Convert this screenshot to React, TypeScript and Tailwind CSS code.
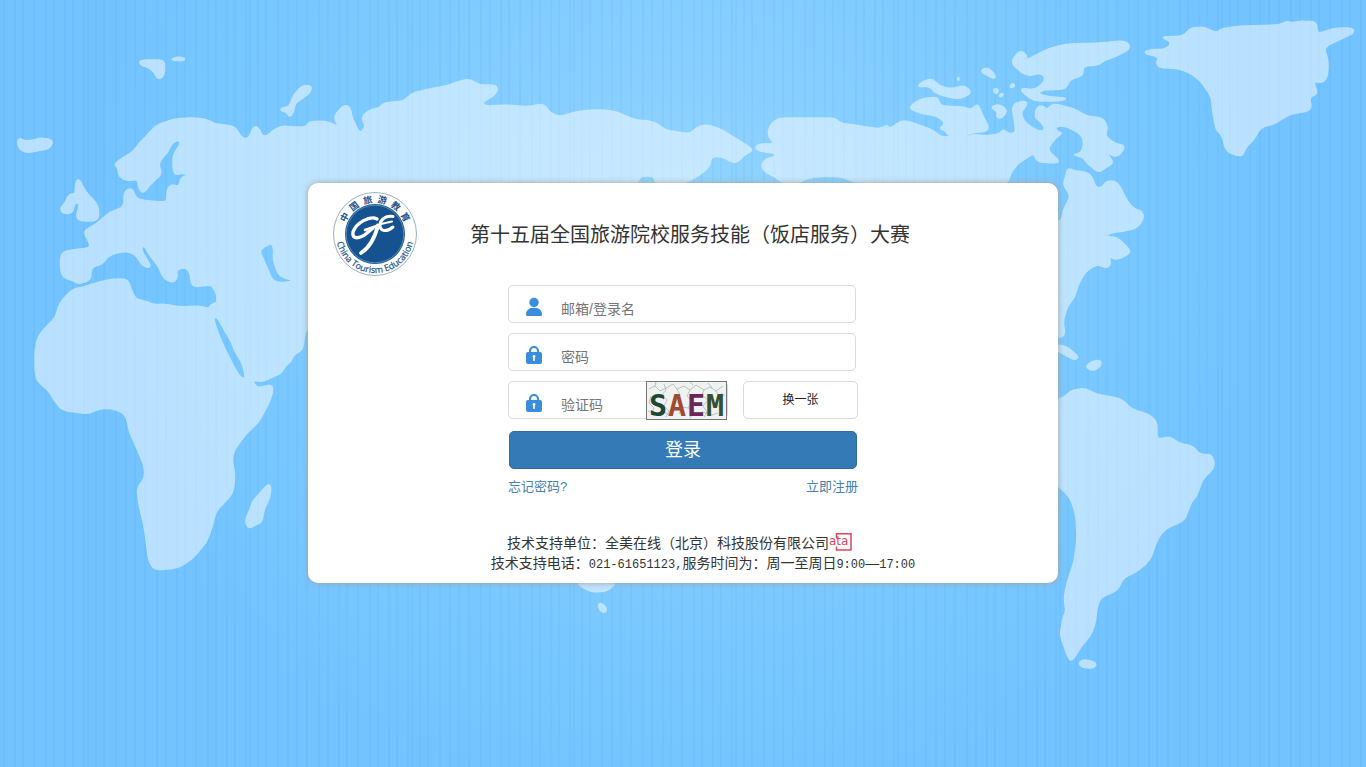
import React, { useState } from 'react';

const land = [
  // Europe, Asia and Africa, with the Caspian and the Red Sea cut out
  'M62 252L72 250L89 248L90 244L83 231L95 225L110 212L124 207L124 193L129 188L134 191L136 199L150 201L164 202L167 200L167 189L172 184L179 187L181 177L190 175L181 173L176 175L173 170L173 155L181 143L178 140L172 143L167 154L158 162L162 174L155 180L149 186L143 194L138 187L138 179L128 181L119 177L118 168L114 164L124 157L133 152L140 142L147 136L155 126L165 122L175 119L185 118L200 118L210 121L215 124L234 126L238 132L243 139L249 138L252 129L256 126L260 130L262 136L267 136L275 129L283 126L293 127L307 127L308 122L320 121L330 122L340 128L334 119L337 112L344 105L350 107L352 118L360 134L366 126L362 120L364 114L372 109L380 108L383 103L404 101L412 93L430 89L450 85L460 81L470 79L479 85L495 85L498 89L494 96L482 102L485 106L510 105L528 107L540 104L546 106L549 112L559 117L575 112L590 110L605 110L617 112L635 120L650 121L658 124L665 130L690 134L697 127L705 125L712 126L722 130L735 138L754 150L745 154L736 164L720 156L711 157L710 166L700 175L685 183L655 183L654 176L640 176L638 183L560 240L400 340L308 330L305 331L303 347L301 351L293 355L291 362L284 367L282 373L270 378L262 382L252 380L257 388L265 386L272 385L273 392L268 405L258 423L248 432L243 438L234 450L232 460L235 475L233 493L225 502L216 511L212 527L206 543L192 559L178 568L155 570L149 562L144 525L139 505L137 488L145 478L144 465L134 442L129 431L127 418L122 412L110 408L98 409L88 414L62 410L53 399L50 392L37 381L35 370L35 350L38 336L46 327L56 317L58 307L62 300L73 289L83 287L95 283L113 279L128 279L131 290L136 299L145 301L155 305L163 304L180 307L200 306L209 309L211 304L217 303L217 295L213 287L210 285L192 287L190 272L184 267L176 270L178 277L173 283L163 278L159 267L148 253L144 245L141 249L146 258L151 266L147 268L141 264L138 258L130 251L115 253L107 257L103 264L91 267L91 280L78 284L74 281L62 277L60 262ZM259 250L271 243L274 248L273 260L279 276L294 281L280 283L272 280L266 265ZM213 317L218 318L223 328L231 341L236 354L242 362L246 379L240 377L233 365L225 349L219 336Z',
  // North America
  'M755 149L758 144L775 144L768 136L769 127L775 120L782 118L835 118L840 123L860 126L880 129L887 125L890 129L902 120L913 123L925 127L934 131L943 138L953 135L963 139L973 134L985 136L1000 134L1003 129L1009 134L1016 133L1014 118L1012 106L1018 102L1027 101L1026 107L1021 112L1023 120L1032 128L1042 132L1045 128L1041 122L1035 118L1036 108L1042 105L1047 110L1051 105L1057 104L1066 107L1075 109L1086 116L1103 118L1108 127L1105 136L1114 143L1126 146L1117 158L1106 152L1114 163L1106 167L1099 173L1086 162L1083 157L1072 155L1082 153L1084 139L1078 132L1065 126L1056 126L1056 131L1063 133L1055 138L1047 150L1059 160L1057 163L1037 162L1034 153L1027 158L1018 163L1010 174L1008 183L857 183L842 177L825 176L808 178L798 183L782 183L776 177L766 173L761 166L765 159L775 157L775 153L764 152Z',
  'M1068 168L1074 171L1087 172L1093 178L1095 187L1102 188L1106 181L1115 181L1120 186L1127 201L1134 209L1142 211L1144 218L1138 227L1130 230L1110 233L1105 236L1118 238L1124 244L1131 251L1126 256L1115 260L1109 256L1111 265L1106 268L1097 264L1085 272L1077 287L1075 297L1068 305L1063 320L1065 336L1056 338L1056 222L1062 220L1063 210L1070 198L1068 191L1063 185L1066 175Z',
  'M1011 63L1016 54L1021 51L1027 55L1026 60L1050 48L1068 44L1102 43L1118 41L1128 42L1130 49L1115 57L1103 61L1099 65L1083 66L1083 76L1070 79L1066 89L1042 90L1038 94L1050 97L1068 98L1060 101L1035 101L1025 95L1020 88L1035 90L1046 80L1042 73L1026 76Z',
  'M908 108L920 99L938 97L940 106L965 107L971 110L978 103L982 115L988 125L988 131L970 133L960 139L948 135L945 130L939 129L946 123L935 115L922 114Z',
  'M918 87L920 83L932 78L939 86L952 89L965 85L972 93L960 99L948 97L935 93L930 86Z',
  'M980 71L987 67L994 73L996 79L988 76Z',
  'M993 90L996 88L999 91L996 94ZM999 95L1003 93L1003 96L1000 97ZM1010 86L1013 83L1015 86L1011 88ZM957 79L959 77L959 81Z',
  'M990 107L1000 104L1008 111L1001 119L996 116L998 112Z',
  // Greenland
  'M1143 53L1151 49L1162 50L1170 46L1170 41L1161 37L1184 36L1190 28L1205 27L1216 33L1221 29L1240 26L1280 25L1287 21L1292 23L1300 21L1317 22L1317 34L1335 28L1353 28L1354 33L1328 45L1324 50L1328 58L1328 75L1323 83L1313 81L1318 94L1309 97L1312 108L1305 112L1293 113L1283 118L1275 124L1261 127L1253 141L1246 147L1243 155L1238 156L1226 151L1222 135L1216 130L1212 107L1212 98L1203 84L1194 75L1183 70L1175 68L1160 68L1156 63L1159 57Z',
  'M1056 345L1066 346L1079 357L1075 360L1067 356L1056 350Z',
  'M1085 367L1092 361L1101 360L1101 366L1093 371Z',
  // South America
  'M1056 400L1065 397L1070 391L1085 388L1095 394L1118 398L1125 402L1131 409L1148 414L1157 421L1157 440L1170 436L1178 443L1193 446L1200 455L1212 454L1215 467L1202 480L1197 496L1191 502L1185 520L1165 529L1158 538L1150 560L1138 571L1123 578L1118 590L1100 598L1097 608L1095 625L1089 638L1082 645L1073 660L1069 660L1060 635L1063 617L1066 612L1064 597L1068 580L1074 562L1077 540L1076 515L1070 497L1056 484Z',
  'M1078 663L1084 659L1097 663L1094 668L1083 668Z',
  // islands west and north of Europe
  'M17 142L20 138L24 141L35 140L38 138L50 139L53 142L49 149L40 150L28 153L20 150Z',
  'M76 180L80 180L85 191L98 205L99 218L94 221L80 221L76 216L79 208L79 202L74 204L73 213L63 214L60 208L66 202L67 197L72 193L75 195Z',
  'M139 62L143 60L165 60L164 77L157 79L155 73L148 67L142 66Z',
  'M170 60L177 57L185 58L184 61Z',
  'M303 85L312 86L310 93L303 98L295 103L293 114L289 117L287 112L281 111L281 108L289 107L294 94Z',
  'M268 484L271 486L270 498L264 509L262 522L257 524L248 529L245 520L250 510L252 502L260 493Z',
  // Australia and Tasmania
  'M576 583L587 590L594 592L607 591L617 583Z',
  'M598 604L602 603L607 609L605 613L600 611Z',
];

type Point = [number, number];

// point that lies on the way from a to b, at most half way
const towards = (a: Point, b: Point, reach: number) => {
  const length = Math.hypot(b[0] - a[0], b[1] - a[1]) || 1;
  const t = Math.min(0.5, reach / length);
  return `${(a[0] + (b[0] - a[0]) * t).toFixed(1)} ${(a[1] + (b[1] - a[1]) * t).toFixed(1)}`;
};

// rounds the corners of a coast line
const soften = (d: string) =>
  d
    .split('Z')
    .filter(Boolean)
    .map((ring) => {
      const points = ring.slice(1).split('L').map((p) => p.split(' ').map(Number) as Point);
      return (
        points
          .map((p, i) => {
            const prev = points[(i + points.length - 1) % points.length];
            const next = points[(i + 1) % points.length];
            return `${i ? 'L' : 'M'}${towards(p, prev, 6)}Q${p[0]} ${p[1]} ${towards(p, next, 6)}`;
          })
          .join('') + 'Z'
      );
    })
    .join('');

const coasts = land.map(soften);

const stripes = [4, 15, 23, 34, 46, 54, 65, 73, 84, 88, 96, 104, 116, 126, 135, 145, 157];

const WorldMap: React.FC = () => (
  <svg
    className="absolute inset-0 h-full w-full"
    viewBox="0 0 1366 767"
    preserveAspectRatio="xMidYMid slice"
    aria-hidden="true"
  >
    <defs>
      <radialGradient id="sky" gradientUnits="userSpaceOnUse" cx="683" cy="220" r="600">
        <stop offset="0" stopColor="#92d4ff" />
        <stop offset="0.5" stopColor="#7fcbff" />
        <stop offset="1" stopColor="#72c3ff" />
      </radialGradient>
      <pattern id="stripes" width="162" height="767" patternUnits="userSpaceOnUse">
        {stripes.map((x) => (
          <rect key={x} x={x - 1} width="2" height="767" fill="#4a9ee8" opacity="0.1" />
        ))}
      </pattern>
    </defs>
    <rect width="1366" height="767" fill="url(#sky)" />
    <rect width="1366" height="767" fill="url(#stripes)" />
    <g fill="#fff" stroke="#fff" strokeWidth="1.500" strokeLinejoin="round" fillRule="evenodd" opacity="0.5">
      {coasts.map((d) => (
        <path key={d} d={d} />
      ))}
    </g>
  </svg>
);

const Logo: React.FC = () => (
  <svg className="h-[86px] w-[86px] shrink-0" viewBox="0 0 86 86" role="img" aria-label="中国旅游教育">
    <defs>
      <path id="arc-bottom" d="M4 43A39 39 0 0 0 82 43" />
    </defs>
    <circle cx="43" cy="43" r="41.500" fill="#fff" stroke="#7f9cbd" strokeWidth="0.800" />
    <circle cx="43" cy="43" r="30" fill="#14538f" />
    <circle cx="43" cy="43" r="28.800" fill="none" stroke="#8fb0d0" strokeWidth="0.600" />
    {['中', '国', '旅', '游', '教', '育'].map((char, i) => (
      <text
        key={char}
        x="43"
        y="11.500"
        textAnchor="middle"
        transform={`rotate(${-61 + i * 24.4} 43 43)`}
        className="font-['Noto_Sans_CJK_SC',sans-serif] text-[9px] font-bold"
        fill="#1c4f88"
      >
        {char}
      </text>
    ))}
    <text className="font-['Open_Sans','Liberation_Sans',sans-serif] text-[9px]" fill="#1c4f88" stroke="#1c4f88" strokeWidth="0.200">
      <textPath href="#arc-bottom" startOffset="50%" textAnchor="middle">
        China Tourism Education
      </textPath>
    </text>
    {/* brush mark */}
    <g fill="none" stroke="#fff" strokeLinecap="round" strokeLinejoin="round">
      <path d="M45 28C38 24 24 32 21 41C19.500 49 28 48 35 42L41 37" strokeWidth="3.400" />
      <path d="M33 39L46 34.500" strokeWidth="2.600" />
      <path d="M46 34.500C43 46 37 57 29 62" strokeWidth="3.800" />
      <path d="M61 25.500C54 24 48 29 48 34C48 41 55 41 61 36" strokeWidth="3" />
      <path d="M49 33L60 30.500" strokeWidth="2.200" />
    </g>
  </svg>
);

const UserIcon: React.FC<{ title: string }> = ({ title }) => (
  <svg className="h-5 w-5 shrink-0" viewBox="0 0 20 20" fill="#3a8ddd" role="img" aria-label={title}>
    <circle cx="10" cy="5.500" r="4.700" />
    <path d="M2 17.500C2 13.500 5 11 8 11H12C15 11 18 13.500 18 17.500Q18 19 16.500 19H3.500Q2 19 2 17.500Z" />
  </svg>
);

const LockIcon: React.FC<{ title: string }> = ({ title }) => (
  <svg className="h-5 w-5 shrink-0" viewBox="0 0 20 20" role="img" aria-label={title}>
    <path d="M6 9V6A4 4 0 0 1 14 6V9" fill="none" stroke="#3a8ddd" strokeWidth="2.200" />
    <rect x="2" y="7" width="16" height="12" rx="2" fill="#3a8ddd" />
    <circle cx="10" cy="11.500" r="1.400" fill="#fff" />
    <rect x="9.200" y="11.500" width="1.600" height="4.500" rx="0.600" fill="#fff" />
  </svg>
);

const cracks = [
  'M3 8L9 5L14 10L22 6L27 3L31 8L38 5L44 9L50 4L58 9L64 6L70 10L77 5',
  'M5 15L3 22L8 27L5 34M18 3L20 9L16 14L21 19L18 25L23 30L20 36',
  'M31 8L34 14L30 20L36 26L33 33M44 9L41 15L46 20L42 27L47 32L44 37',
  'M58 9L56 14L62 19L57 25L61 31L58 36M70 10L73 16L69 22L76 28L73 35',
  'M2 30L10 33L16 30L24 34M36 26L42 27M52 33L57 31L66 34L72 32M62 2L66 7M9 5L10 1M47 4L44 1M75 12L79 15',
];

const Captcha: React.FC = () => (
  <svg className="h-[39px] w-[81px] shrink-0" viewBox="0 0 81 39" role="img" aria-label="SAEM">
    <rect x="0.500" y="0.500" width="80" height="38" fill="#eef3f1" stroke="#777" />
    <g fill="none" stroke="#a8aaa9" strokeWidth="0.700">
      {cracks.map((d) => (
        <path key={d} d={d} />
      ))}
    </g>
    <g className="font-['DejaVu_Sans_Mono',monospace] text-[30px] font-bold" textAnchor="middle">
      <text x="12" y="35" fill="#204733">S</text>
      <text x="31" y="35" fill="#a04a34">A</text>
      <text x="50" y="35" fill="#6b2558">E</text>
      <text x="69" y="35" fill="#34502f">M</text>
    </g>
  </svg>
);

interface FieldProps {
  id: string;
  label: string;
  type: string;
  icon: React.FC<{ title: string }>;
  children?: React.ReactNode;
}

const Field: React.FC<FieldProps> = ({ id, label, type, icon: Icon, children }) => {
  const [value, setValue] = useState('');

  return (
    <div className="flex h-[38px] min-w-0 flex-1 items-center rounded-[5px] border border-[#d9d9dc] bg-white pl-[15px]">
      <label htmlFor={id} className="flex pt-[6px]">
        <Icon title={label} />
      </label>
      <input
        id={id}
        type={type}
        value={value}
        placeholder={label}
        onChange={(e) => setValue(e.target.value)}
        className="ml-[17px] h-full w-full min-w-0 flex-1 bg-transparent pt-[9px] text-sm text-gray-700 outline-none placeholder:text-[#757575]"
      />
      {children}
    </div>
  );
};

export default function App() {
  return (
    <div className="relative flex min-h-screen items-center justify-center overflow-hidden bg-[#72c3ff] pb-px font-['Liberation_Sans','Noto_Sans_CJK_SC',sans-serif] text-[#333]">
      <WorldMap />

      <main className="relative w-full max-w-[750px] rounded-[10px] bg-white pt-2 pb-[10px] shadow-[0_0_6px_#a5a5a5]">
        <header className="flex items-center pl-6">
          <Logo />
          <h1 className="flex-1 pr-24 text-center font-['Noto_Sans_CJK_SC',sans-serif] text-xl">
            第十五届全国旅游院校服务技能（饭店服务）大赛
          </h1>
        </header>

        <form className="mx-auto mt-2 w-[350px]" onSubmit={(e) => e.preventDefault()}>
          <div className="flex flex-col gap-[10px]">
            <div className="flex pr-[2px]">
              <Field id="account" label="邮箱/登录名" type="text" icon={UserIcon} />
            </div>
            <div className="flex pr-[2px]">
              <Field id="password" label="密码" type="password" icon={LockIcon} />
            </div>
            <div className="flex gap-[15px]">
              <Field id="captcha" label="验证码" type="text" icon={LockIcon}>
                <Captcha />
              </Field>
              <button type="button" className="h-[38px] w-[115px] rounded-[5px] border border-[#d9d9dc] bg-white text-xs text-[#222]">
                换一张
              </button>
            </div>
          </div>

          <div className="mt-3 px-px">
            <button type="submit" className="h-[38px] w-full rounded-[5px] border border-[#2e6da4] bg-[#337ab7] text-lg leading-none text-white">
              登录
            </button>
          </div>
          <div className="mt-2 flex justify-between text-[13px] leading-5 text-[#4580b0]">
            <a href="#forgot">忘记密码?</a>
            <a href="#register">立即注册</a>
          </div>
        </form>

        <footer className="mt-9 text-center text-sm leading-5">
          <p className="flex items-center justify-center pr-[6px]">
            技术支持单位：全美在线（北京）科技股份有限公司
            <svg className="h-5 w-6" viewBox="0 0 24 20" role="img" aria-label="ata">
              <path d="M7.500 5V0.800H22V17H7.500V13.500" fill="none" stroke="#d9475b" strokeWidth="1.500" />
              <text x="0" y="12" className="font-['DejaVu_Sans',sans-serif] text-xs" fill="#d9475b">ata</text>
            </svg>
          </p>
          <p className="pl-10">
            技术支持电话：<span className="font-['Liberation_Mono',monospace] text-xs">021-61651123,</span>
            服务时间为：周一至周日<span className="font-['Liberation_Mono',monospace] text-xs">9:00</span>—
            <span className="font-['Liberation_Mono',monospace] text-xs">17:00</span>
          </p>
        </footer>
      </main>
    </div>
  );
}
